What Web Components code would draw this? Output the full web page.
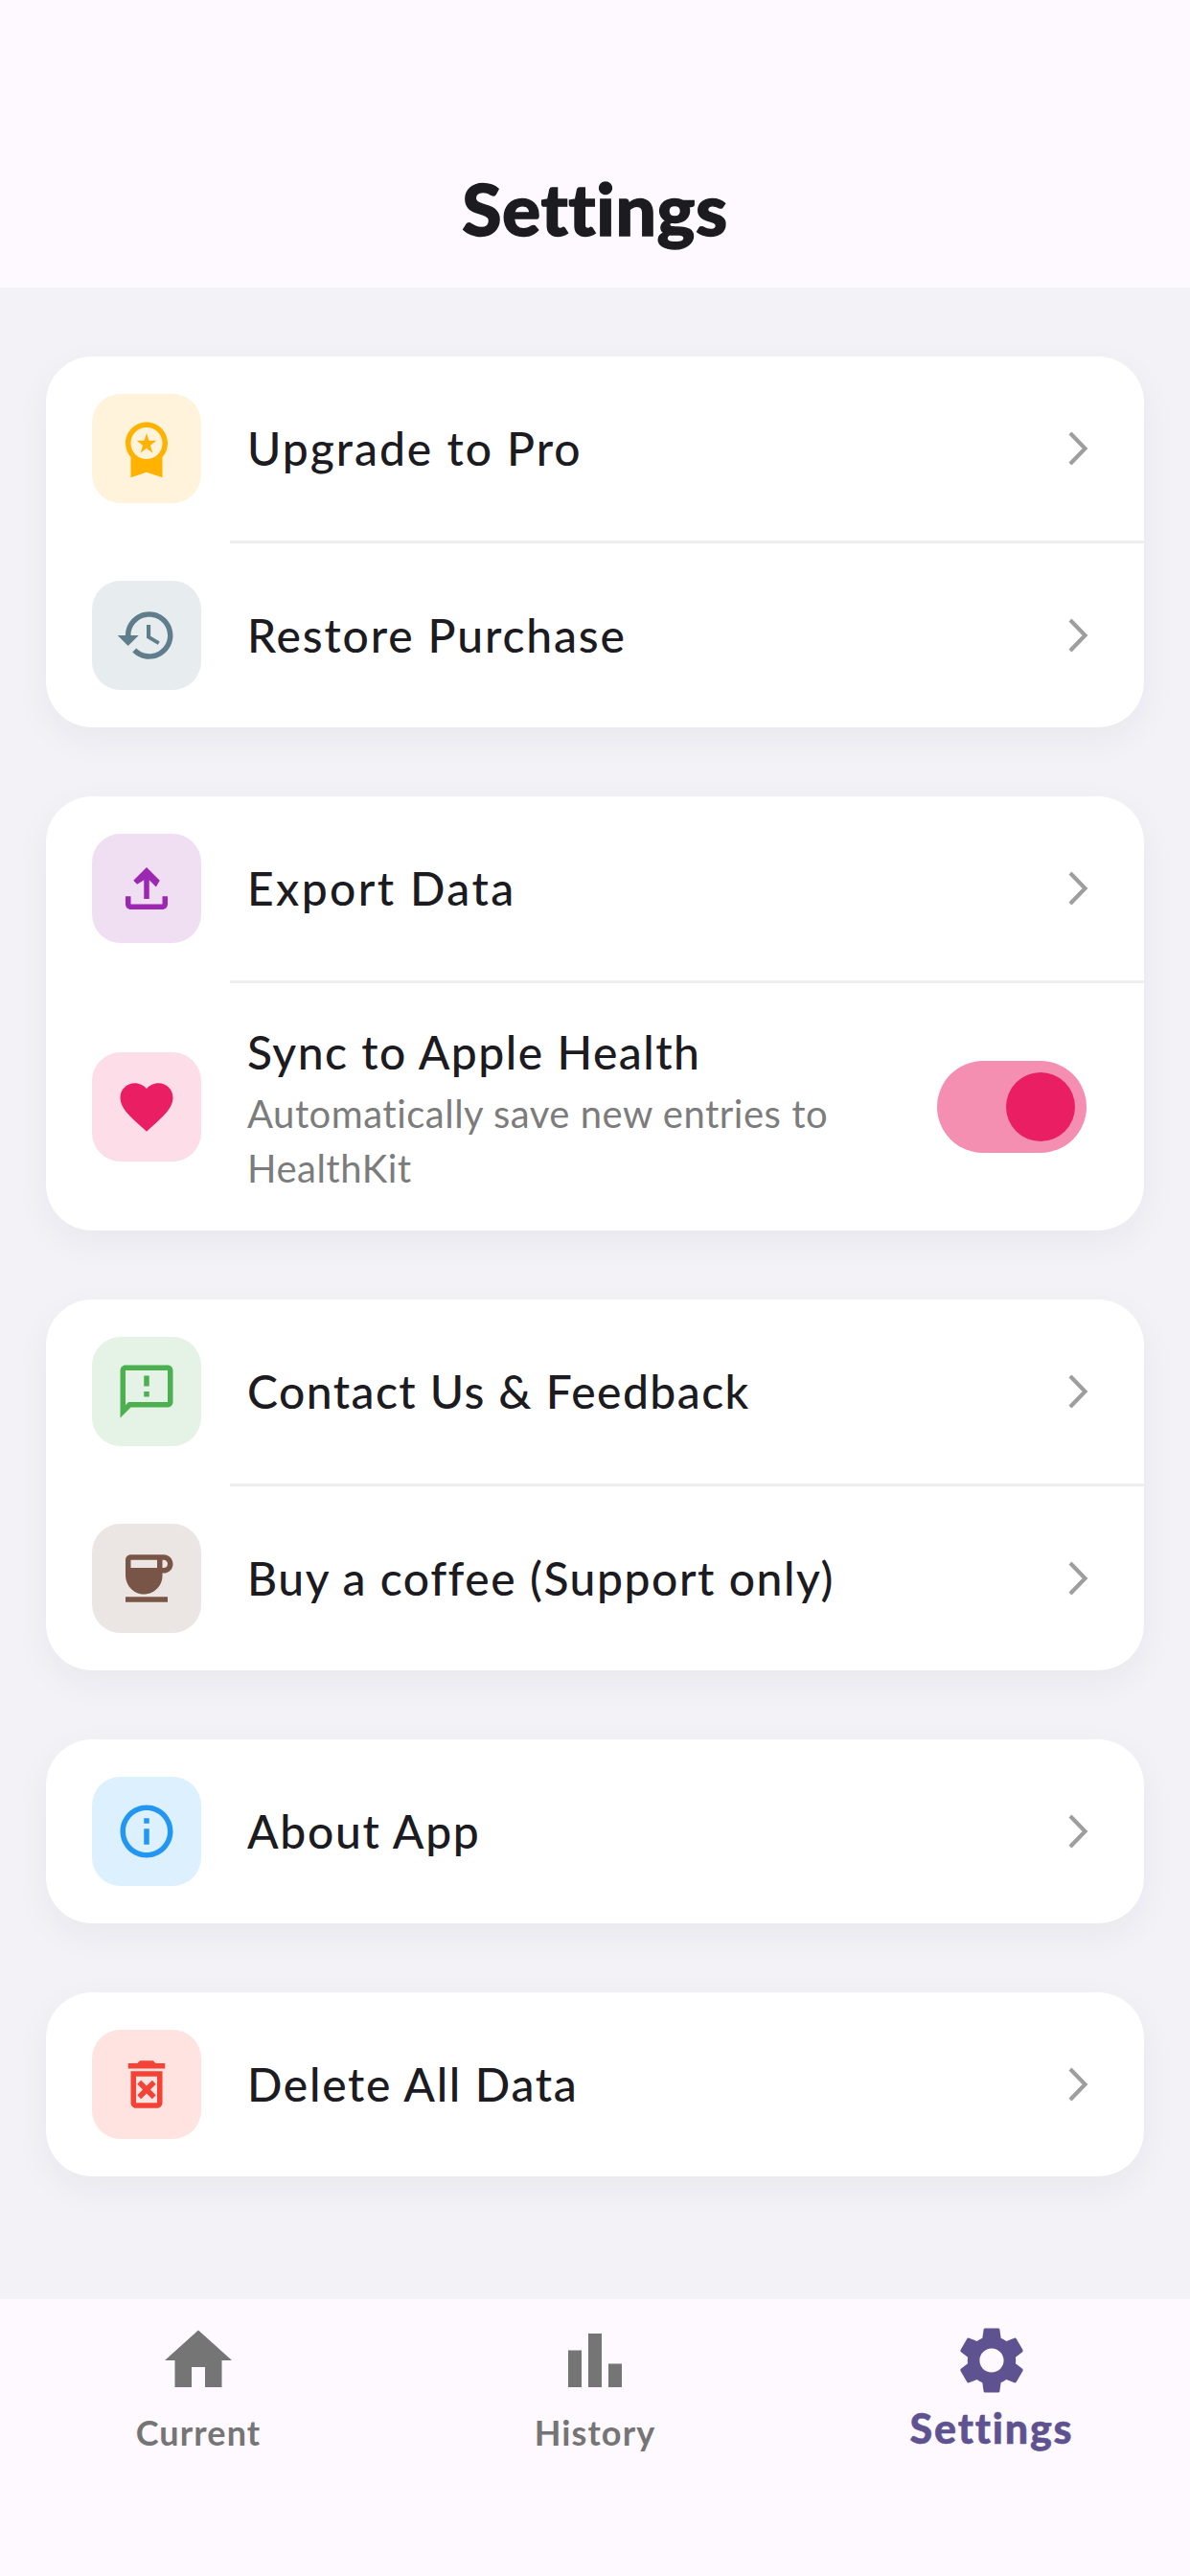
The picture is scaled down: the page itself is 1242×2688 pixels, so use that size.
<!DOCTYPE html>
<html lang="en">
<head>
<meta charset="utf-8">
<title>Settings</title>
<style>
    html, body { margin: 0; padding: 0; }
    body { font-family: "Lato", "Liberation Sans", sans-serif; color: #1c1b1f; background: #f2f2f7; }
</style>
</head>
<body>
<settings-screen>
    <app-header slot="header">Settings</app-header>

    <settings-card>
        <settings-row icon="premium" color="#ffb300" tint="#fff3dc" track="2" label="Upgrade to Pro"></settings-row>
        <row-divider></row-divider>
        <settings-row icon="restore" color="#607d8b" tint="#e7ecee" track="1.85" label="Restore Purchase"></settings-row>
    </settings-card>

    <settings-card>
        <settings-row icon="upload" color="#9c27b0" tint="#f0dff3" track="2.4" label="Export Data"></settings-row>
        <row-divider></row-divider>
        <settings-row icon="heart" color="#e91e63" tint="#fcdde8" track="1.5" label="Sync to Apple Health" sub="Automatically save new entries to HealthKit">
            <toggle-switch slot="trailing" checked></toggle-switch>
        </settings-row>
    </settings-card>

    <settings-card>
        <settings-row icon="feedback" color="#4caf50" tint="#e4f3e5" track="1.45" label="Contact Us &amp; Feedback"></settings-row>
        <row-divider></row-divider>
        <settings-row icon="coffee" color="#795548" tint="#ebe5e3" track="1.55" label="Buy a coffee (Support only)"></settings-row>
    </settings-card>

    <settings-card>
        <settings-row icon="info" color="#2196f3" tint="#ddf0fe" track="1.7" label="About App"></settings-row>
    </settings-card>

    <settings-card>
        <settings-row icon="trash" color="#f44336" tint="#fee3e1" track="1.7" label="Delete All Data"></settings-row>
    </settings-card>

    <bottom-nav slot="nav">
        <nav-item icon="home" label="Current"></nav-item>
        <nav-item icon="bars" label="History"></nav-item>
        <nav-item icon="gear" label="Settings" active></nav-item>
    </bottom-nav>
</settings-screen>

<script>
const ICONS = {
    premium: 'M9.68 13.69L12 11.93l2.31 1.76-.88-2.85L15.75 9h-2.84L12 6.19 11.09 9H8.25l2.31 1.84-.88 2.85zM20 10c0-4.42-3.58-8-8-8s-8 3.58-8 8c0 2.03.76 3.87 2 5.28V23l6-2 6 2v-7.72c1.24-1.41 2-3.25 2-5.28zm-8-6c3.31 0 6 2.69 6 6s-2.69 6-6 6-6-2.69-6-6 2.69-6 6-6z',
    restore: 'M13 3c-4.97 0-9 4.03-9 9H1l3.89 3.89.07.14L9 12H6c0-3.87 3.13-7 7-7s7 3.13 7 7-3.13 7-7 7c-1.93 0-3.68-.79-4.94-2.06l-1.42 1.42C8.27 19.99 10.51 21 13 21c4.97 0 9-4.03 9-9s-4.03-9-9-9zm-1 5v5l4.28 2.54.72-1.21-3.5-2.08V8H12z',
    upload: 'M18 15v3H6v-3H4v3c0 1.1.9 2 2 2h12c1.1 0 2-.9 2-2v-3h-2zM7 9l1.41 1.41L11 8.83V16h2V8.83l2.59 2.58L17 9l-5-5-5 5z',
    heart: 'M12 21.35l-1.45-1.32C5.4 15.36 2 12.28 2 8.5 2 5.42 4.42 3 7.5 3c1.74 0 3.41.81 4.5 2.09C13.09 3.81 14.76 3 16.5 3 19.58 3 22 5.42 22 8.5c0 3.78-3.4 6.86-8.55 11.54L12 21.35z',
    feedback: 'M20 2H4c-1.1 0-1.99.9-1.99 2L2 22l4-4h14c1.1 0 2-.9 2-2V4c0-1.1-.9-2-2-2zm0 14H5.17L4 17.17V4h16v12zm-9-4h2v2h-2zm0-6h2v4h-2z',
    coffee: 'M18.5 3H6c-1.1 0-2 .9-2 2v5.71c0 3.83 2.95 7.18 6.78 7.29 3.96.12 7.22-3.06 7.22-7v-1h.5c1.93 0 3.5-1.57 3.5-3.5S20.43 3 18.5 3zM16 5v3H6V5h10zm2.5 3H18V5h.5c.83 0 1.5.67 1.5 1.5S19.33 8 18.5 8zM4 19h16v2H4v-2z',
    info: 'M11 7h2v2h-2zm0 4h2v6h-2zm1-9C6.48 2 2 6.48 2 12s4.48 10 10 10 10-4.48 10-10S17.52 2 12 2zm0 18c-4.41 0-8-3.59-8-8s3.59-8 8-8 8 3.59 8 8-3.59 8-8 8z',
    trash: 'M14.12 10.47L12 12.59l-2.13-2.12-1.41 1.41L10.59 14l-2.12 2.12 1.41 1.41L12 15.41l2.12 2.12 1.41-1.41L13.41 14l2.12-2.12zM15.5 4l-1-1h-5l-1 1H5v2h14V4zM6 19c0 1.1.9 2 2 2h8c1.1 0 2-.9 2-2V7H6v12zM8 9h8v10H8V9z',
    home: 'M10 20v-6h4v6h5v-8h3L12 3 2 12h3v8z',
    bars: 'M4 9h4v11H4zm12 4h4v7h-4zm-6-9h4v16h-4z',
    gear: 'M19.14 12.94c.04-.3.06-.61.06-.94 0-.32-.02-.64-.07-.94l2.03-1.58c.18-.14.23-.41.12-.61l-1.92-3.32c-.12-.22-.37-.29-.59-.22l-2.39.96c-.5-.38-1.03-.7-1.62-.94l-.36-2.54c-.04-.24-.24-.41-.48-.41h-3.84c-.24 0-.43.17-.47.41l-.36 2.54c-.59.24-1.13.57-1.62.94l-2.39-.96c-.22-.08-.47 0-.59.22L2.74 8.87c-.12.21-.08.47.12.61l2.03 1.58c-.05.3-.09.63-.09.94s.02.64.07.94l-2.03 1.58c-.18.14-.23.41-.12.61l1.92 3.32c.12.22.37.29.59.22l2.39-.96c.5.38 1.03.7 1.62.94l.36 2.54c.05.24.24.41.48.41h3.84c.24 0 .44-.17.47-.41l.36-2.54c.59-.24 1.13-.56 1.62-.94l2.39.96c.22.08.47 0 .59-.22l1.92-3.32c.12-.22.07-.47-.12-.61l-2.01-1.58zM12 15.6c-1.98 0-3.6-1.62-3.6-3.6s1.62-3.6 3.6-3.6 3.6 1.62 3.6 3.6-1.62 3.6-3.6 3.6z'
};

class SettingsScreen extends HTMLElement {
    constructor() {
        super();
        this.attachShadow({mode: 'open'});
        this.shadowRoot.innerHTML = `
            <style>
                :host { display: flex; flex-direction: column; height: 2688px; background: #f2f2f7; }
                main { flex: 1; display: flex; flex-direction: column; gap: 72px; padding: 72px 48px 0; }
            </style>
            <slot name="header"></slot>
            <main><slot></slot></main>
            <slot name="nav"></slot>
        `;
    }
}

class AppHeader extends HTMLElement {
    constructor() {
        super();
        this.attachShadow({mode: 'open'});
        this.shadowRoot.innerHTML = `
            <style>
                :host {
                    display: flex; justify-content: center; align-items: flex-end; box-sizing: border-box;
                    height: 300px; padding-bottom: 41px; background: #fdf9ff;
                    font-size: 75px; line-height: 84px; font-weight: 900; letter-spacing: .6px;
                    -webkit-text-stroke: 1.4px #1c1b1f; color: #1c1b1f;
                }
            </style>
            <slot></slot>
        `;
    }
}

class SettingsCard extends HTMLElement {
    constructor() {
        super();
        this.attachShadow({mode: 'open'});
        this.shadowRoot.innerHTML = `
            <style>
                :host {
                    display: flex; flex-direction: column; background: #fff; border-radius: 48px;
                    box-shadow: 0 12px 36px rgba(30, 30, 60, .05);
                }
            </style>
            <slot></slot>
        `;
    }
}

class RowDivider extends HTMLElement {
    constructor() {
        super();
        this.attachShadow({mode: 'open'});
        this.shadowRoot.innerHTML = `
            <style>
                :host { display: block; height: 3px; margin-left: 192px; background: #eeeeee; }
            </style>
        `;
    }
}

class SettingsRow extends HTMLElement {
    connectedCallback() {
        if (this.shadowRoot) return;
        this.attachShadow({mode: 'open'});
        const icon = ICONS[this.getAttribute('icon')];
        const color = this.getAttribute('color');
        const tint = this.getAttribute('tint');
        const track = this.getAttribute('track') || '1.7';
        const label = this.getAttribute('label').replace(/&/g, '&amp;');
        const sub = this.getAttribute('sub');
        this.shadowRoot.innerHTML = `
            <style>
                :host {
                    display: flex; align-items: center; box-sizing: border-box; min-height: 192px;
                    padding: 36px 60px 36px 48px;
                }
                .box {
                    flex: none; width: 114px; height: 114px; border-radius: 30px;
                    display: flex; align-items: center; justify-content: center;
                }
                .box svg { width: 66px; height: 66px; display: block; }
                .text { flex: 1; min-width: 0; margin-left: 48px; margin-right: 48px; }
                .label { font-size: 48px; line-height: 72px; font-weight: 500; letter-spacing: ${track}px; color: #1c1b1f; }
                .sub { font-size: 40px; line-height: 57px; font-weight: 400; letter-spacing: .5px; color: #7c7c7c; }
                .chevron { display: block; width: 24px; height: 40px; overflow: visible; }
            </style>
            <div class="box" style="background:${tint}">
                <svg viewBox="0 0 24 24" fill="${color}"><path d="${icon}"/></svg>
            </div>
            <div class="text">
                <div class="label">${label}</div>
                ${sub ? `<div class="sub">${sub}</div>` : ''}
            </div>
            <slot name="trailing">
                <svg class="chevron" viewBox="0 0 24 40" fill="none" stroke="#9e9e9e" stroke-width="4.2">
                    <path d="M7 4l15.5 16L7 36"/>
                </svg>
            </slot>
        `;
    }
}

class ToggleSwitch extends HTMLElement {
    constructor() {
        super();
        this.attachShadow({mode: 'open'});
        this.shadowRoot.innerHTML = `
            <style>
                :host {
                    display: flex; justify-content: flex-end; align-items: center; box-sizing: border-box;
                    width: 156px; height: 96px; padding: 0 12px; border-radius: 48px; background: #f48fb1;
                }
                i { display: block; width: 72px; height: 72px; border-radius: 50%; background: #e91e63; }
            </style>
            <i></i>
        `;
    }
}

class BottomNav extends HTMLElement {
    constructor() {
        super();
        this.attachShadow({mode: 'open'});
        this.shadowRoot.innerHTML = `
            <style>
                :host {
                    display: grid; grid-template-columns: repeat(3, 1fr); box-sizing: border-box;
                    height: 289px; padding-top: 22px; background: #fdf9ff;
                }
            </style>
            <slot></slot>
        `;
    }
}

class NavItem extends HTMLElement {
    connectedCallback() {
        if (this.shadowRoot) return;
        this.attachShadow({mode: 'open'});
        const active = this.hasAttribute('active');
        const color = active ? '#5f5290' : '#757575';
        this.shadowRoot.innerHTML = `
            <style>
                :host { display: flex; flex-direction: column; align-items: center; color: ${color}; }
                svg { width: 84px; height: 84px; display: block; }
                span {
                    font-size: ${active ? 43 : 36}px; line-height: ${active ? 46 : 44}px;
                    margin-top: ${active ? 6 : 11}px;
                    font-weight: ${active ? 900 : 700}; letter-spacing: ${active ? 1.8 : 1.1}px;
                    -webkit-text-stroke: ${active ? .5 : 0}px ${color};
                }
            </style>
            <svg viewBox="0 0 24 24" fill="${color}"><path d="${ICONS[this.getAttribute('icon')]}"/></svg>
            <span>${this.getAttribute('label')}</span>
        `;
    }
}

customElements.define('settings-screen', SettingsScreen);
customElements.define('app-header', AppHeader);
customElements.define('settings-card', SettingsCard);
customElements.define('row-divider', RowDivider);
customElements.define('settings-row', SettingsRow);
customElements.define('toggle-switch', ToggleSwitch);
customElements.define('bottom-nav', BottomNav);
customElements.define('nav-item', NavItem);
</script>
</body>
</html>
